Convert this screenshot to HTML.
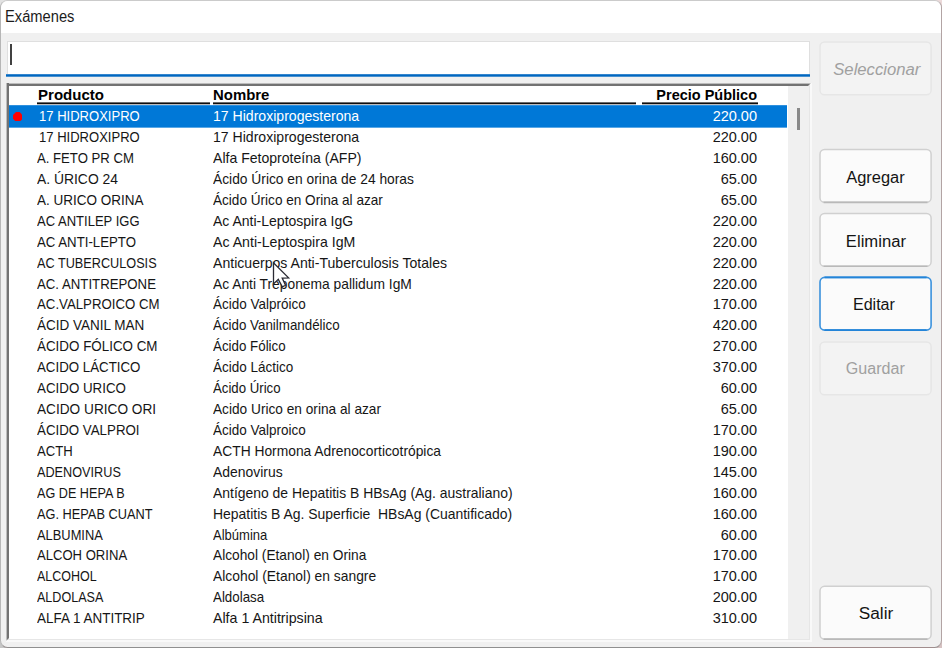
<!DOCTYPE html><html><head><meta charset="utf-8"><title>Exámenes</title><style>
html,body{margin:0;padding:0;}
body{width:943px;height:649px;overflow:hidden;background:#fff;font-family:"Liberation Sans",sans-serif;position:relative;}
#corner{position:absolute;left:0;top:0;width:942px;height:648px;background:#fff;}
.cn{position:absolute;width:10px;height:10px;}
#win{position:absolute;left:0;top:0;width:940px;height:646px;border:1px solid;border-color:#cbcbcb #b2a4a4 #979090 #b6b6b6;border-radius:7.5px;background:#f0f0f0;overflow:hidden;}
#title{position:absolute;left:0;top:0;width:940px;height:32.3px;background:#fff;}
#title span{position:absolute;left:4.2px;top:7.2px;font-size:15.8px;line-height:18px;color:#1c1c1c;white-space:nowrap;transform-origin:0 0;transform:scaleX(0.93);}
#inp{position:absolute;left:5.5px;top:39.5px;width:803.3px;height:34.5px;background:#fff;border:1px solid #dfdfdf;border-bottom:none;box-sizing:border-box;}
#inpline{position:absolute;left:5px;top:73px;width:804.4px;height:3px;background:linear-gradient(#3385cd 0,#3385cd 1px,#0067c0 1px,#0067c0 2px,#4890ce 2px,#4890ce 3px);}
#caret{position:absolute;left:9px;top:43px;width:2px;height:21px;background:#414141;}
.abs{position:absolute;}
.btn{position:absolute;left:819.7px;width:109.9px;height:51.3px;border:1.5px solid transparent;border-radius:5.5px;background:transparent;font-size:16px;color:#141414;text-align:center;line-height:54.6px;overflow:hidden;}
.btn span{display:inline-block;}
.btn.dis{color:#a0a0a0;}

.t{position:absolute;white-space:pre;font-size:14.2px;line-height:16px;height:16px;color:#161616;transform-origin:0 0;}
.p{position:absolute;white-space:pre;font-size:14.2px;line-height:16px;height:16px;color:#161616;width:80px;text-align:right;transform-origin:100% 0;}
.h{position:absolute;white-space:pre;font-size:14.8px;line-height:16px;color:#000;font-weight:bold;transform-origin:0 0;}
.w{color:#fff;}
</style></head><body>
<div id="corner"></div><div class="cn" style="left:0;top:0;background:#e2e2e2"></div><div class="cn" style="left:932px;top:0;background:#ecdada"></div><div class="cn" style="left:0;top:638px;background:#c6c6c6"></div><div class="cn" style="left:932px;top:638px;background:#d6c2c2"></div>
<div id="win">
<div id="title"><span>Exámenes</span></div>
<div id="inp"></div><div id="inpline"></div><div id="caret"></div>
</div>
<div class="abs" style="left:8px;top:647px;width:926px;height:1px;background:linear-gradient(90deg,#8f8f8f 0,#8f8f8f 84%,#a18d8d 88%,#a18d8d 100%);"></div>
<div class="abs" style="left:6px;top:83px;width:805.8px;height:558.6px;background:#f9f9f9;"></div>
<div class="abs" style="left:6px;top:83px;width:804px;height:557px;background:#e6e6e6;"></div>
<div class="abs" style="left:9px;top:86px;width:800px;height:553px;background:#fff;"></div>
<div class="abs" style="left:6px;top:83px;width:805px;height:3px;background:linear-gradient(#bcbcbc 0,#bcbcbc 1px,#727272 1px,#727272 3px);clip-path:polygon(0 0,100% 0,calc(100% - 3px) 100%,0 100%);"></div>
<div class="abs" style="left:6px;top:83px;width:3px;height:558px;background:linear-gradient(90deg,#bcbcbc 0,#bcbcbc 1px,#727272 1px,#727272 3px);clip-path:polygon(0 0,100% 0,100% calc(100% - 3px),0 100%);"></div>
<div class="abs" style="left:787.5px;top:86px;width:21.5px;height:553px;background:#f0f0f0;"></div>
<div class="abs" style="left:797.1px;top:108.2px;width:2.7px;height:22px;background:#8a8a8a;"></div>
<div class="h" id="h1" style="left:38.3px;top:87.3px;transform:scaleX(1.0160);">Producto</div>
<div class="h" id="h2" style="left:213.2px;top:87.3px;transform:scaleX(1.0090);">Nombre</div>
<div class="h" id="h3" style="left:557.4px;width:200px;text-align:right;top:87.3px;transform-origin:100% 0;transform:scaleX(0.9790);">Precio Público</div>
<div class="abs" style="left:37.4px;top:102px;width:172.5px;height:3px;background:linear-gradient(#6a6a6a 0,#6a6a6a 1px,#0e0e0e 1px,#0e0e0e 2px,#bdbdbd 2px,#bdbdbd 3px);"></div>
<div class="abs" style="left:212.9px;top:102px;width:423.2px;height:3px;background:linear-gradient(#6a6a6a 0,#6a6a6a 1px,#0e0e0e 1px,#0e0e0e 2px,#bdbdbd 2px,#bdbdbd 3px);"></div>
<div class="abs" style="left:641.7px;top:102px;width:116.1px;height:3px;background:linear-gradient(#6a6a6a 0,#6a6a6a 1px,#0e0e0e 1px,#0e0e0e 2px,#bdbdbd 2px,#bdbdbd 3px);"></div>
<div class="abs" style="left:9px;top:105px;width:778px;height:23px;background:linear-gradient(#2e90de 0,#2e90de 1px,#0078d7 1px,#0078d7 22px,#5aa8e6 22px,#5aa8e6 23px);"></div>
<svg class="abs" style="left:12.6px;top:111.6px;" width="9.6" height="9.8" viewBox="0 0 9.6 9.8"><polygon points="3,0 6.6,0 9.6,3 9.6,6.8 6.6,9.8 3,9.8 0,6.8 0,3" fill="#fe0000"/></svg>
<div class="t w" id="a0" style="left:38.8px;top:108.21px;transform:scaleX(0.9192);">17 HIDROXIPRO</div>
<div class="t w" id="b0" style="left:213.0px;top:108.21px;transform:scaleX(0.9912);">17 Hidroxiprogesterona</div>
<div class="p w" id="c0" style="left:677.0px;top:108.21px;transform:scaleX(1.0220);">220.00</div>
<div class="t" id="a1" style="left:38.8px;top:129.12px;transform:scaleX(0.9192);">17 HIDROXIPRO</div>
<div class="t" id="b1" style="left:213.0px;top:129.12px;transform:scaleX(0.9912);">17 Hidroxiprogesterona</div>
<div class="p" id="c1" style="left:677.0px;top:129.12px;transform:scaleX(1.0220);">220.00</div>
<div class="t" id="a2" style="left:37.4px;top:150.04px;transform:scaleX(0.9264);">A. FETO PR CM</div>
<div class="t" id="b2" style="left:213.0px;top:150.04px;transform:scaleX(0.9913);">Alfa Fetoproteína (AFP)</div>
<div class="p" id="c2" style="left:677.0px;top:150.04px;transform:scaleX(1.0220);">160.00</div>
<div class="t" id="a3" style="left:37.4px;top:170.96px;transform:scaleX(0.9781);">A. ÚRICO 24</div>
<div class="t" id="b3" style="left:213.0px;top:170.96px;transform:scaleX(0.9724);">Ácido Úrico en orina de 24 horas</div>
<div class="p" id="c3" style="left:677.0px;top:170.96px;transform:scaleX(1.0220);">65.00</div>
<div class="t" id="a4" style="left:37.4px;top:191.87px;transform:scaleX(0.9519);">A. URICO ORINA</div>
<div class="t" id="b4" style="left:213.0px;top:191.87px;transform:scaleX(0.9572);">Ácido Úrico en Orina al azar</div>
<div class="p" id="c4" style="left:677.0px;top:191.87px;transform:scaleX(1.0220);">65.00</div>
<div class="t" id="a5" style="left:37.4px;top:212.79px;transform:scaleX(0.9182);">AC ANTILEP IGG</div>
<div class="t" id="b5" style="left:213.0px;top:212.79px;transform:scaleX(0.9873);">Ac Anti-Leptospira IgG</div>
<div class="p" id="c5" style="left:677.0px;top:212.79px;transform:scaleX(1.0220);">220.00</div>
<div class="t" id="a6" style="left:37.4px;top:233.71px;transform:scaleX(0.9316);">AC ANTI-LEPTO</div>
<div class="t" id="b6" style="left:213.0px;top:233.71px;transform:scaleX(0.9972);">Ac Anti-Leptospira IgM</div>
<div class="p" id="c6" style="left:677.0px;top:233.71px;transform:scaleX(1.0220);">220.00</div>
<div class="t" id="a7" style="left:37.4px;top:254.63px;transform:scaleX(0.8942);">AC TUBERCULOSIS</div>
<div class="t" id="b7" style="left:213.0px;top:254.63px;transform:scaleX(0.9924);">Anticuerpos Anti-Tuberculosis Totales</div>
<div class="p" id="c7" style="left:677.0px;top:254.63px;transform:scaleX(1.0220);">220.00</div>
<div class="t" id="a8" style="left:37.4px;top:275.54px;transform:scaleX(0.9317);">AC. ANTITREPONE</div>
<div class="t" id="b8" style="left:213.0px;top:275.54px;transform:scaleX(0.9735);">Ac Anti Treponema pallidum IgM</div>
<div class="p" id="c8" style="left:677.0px;top:275.54px;transform:scaleX(1.0220);">220.00</div>
<div class="t" id="a9" style="left:37.4px;top:296.46px;transform:scaleX(0.9325);">AC.VALPROICO CM</div>
<div class="t" id="b9" style="left:213.0px;top:296.46px;transform:scaleX(0.9498);">Ácido Valpróico</div>
<div class="p" id="c9" style="left:677.0px;top:296.46px;transform:scaleX(1.0220);">170.00</div>
<div class="t" id="a10" style="left:37.4px;top:317.38px;transform:scaleX(0.9524);">ÁCID VANIL MAN</div>
<div class="t" id="b10" style="left:213.0px;top:317.38px;transform:scaleX(0.9406);">Ácido Vanilmandélico</div>
<div class="p" id="c10" style="left:677.0px;top:317.38px;transform:scaleX(1.0220);">420.00</div>
<div class="t" id="a11" style="left:37.4px;top:338.29px;transform:scaleX(0.9438);">ÁCIDO FÓLICO CM</div>
<div class="t" id="b11" style="left:213.0px;top:338.29px;transform:scaleX(0.9400);">Ácido Fólico</div>
<div class="p" id="c11" style="left:677.0px;top:338.29px;transform:scaleX(1.0220);">270.00</div>
<div class="t" id="a12" style="left:37.4px;top:359.21px;transform:scaleX(0.9374);">ACIDO LÁCTICO</div>
<div class="t" id="b12" style="left:213.0px;top:359.21px;transform:scaleX(0.9498);">Ácido Láctico</div>
<div class="p" id="c12" style="left:677.0px;top:359.21px;transform:scaleX(1.0220);">370.00</div>
<div class="t" id="a13" style="left:37.4px;top:380.13px;transform:scaleX(0.9406);">ACIDO URICO</div>
<div class="t" id="b13" style="left:213.0px;top:380.13px;transform:scaleX(0.9312);">Ácido Úrico</div>
<div class="p" id="c13" style="left:677.0px;top:380.13px;transform:scaleX(1.0220);">60.00</div>
<div class="t" id="a14" style="left:37.4px;top:401.04px;transform:scaleX(0.9624);">ACIDO URICO ORI</div>
<div class="t" id="b14" style="left:213.0px;top:401.04px;transform:scaleX(0.9639);">Acido Urico en orina al azar</div>
<div class="p" id="c14" style="left:677.0px;top:401.04px;transform:scaleX(1.0220);">65.00</div>
<div class="t" id="a15" style="left:37.4px;top:421.96px;transform:scaleX(0.9381);">ÁCIDO VALPROI</div>
<div class="t" id="b15" style="left:213.0px;top:421.96px;transform:scaleX(0.9498);">Ácido Valproico</div>
<div class="p" id="c15" style="left:677.0px;top:421.96px;transform:scaleX(1.0220);">170.00</div>
<div class="t" id="a16" style="left:37.4px;top:442.88px;transform:scaleX(0.9249);">ACTH</div>
<div class="t" id="b16" style="left:213.0px;top:442.88px;transform:scaleX(0.9736);">ACTH Hormona Adrenocorticotrópica</div>
<div class="p" id="c16" style="left:677.0px;top:442.88px;transform:scaleX(1.0220);">190.00</div>
<div class="t" id="a17" style="left:37.4px;top:463.80px;transform:scaleX(0.8939);">ADENOVIRUS</div>
<div class="t" id="b17" style="left:213.0px;top:463.80px;transform:scaleX(0.9816);">Adenovirus</div>
<div class="p" id="c17" style="left:677.0px;top:463.80px;transform:scaleX(1.0220);">145.00</div>
<div class="t" id="a18" style="left:37.4px;top:484.71px;transform:scaleX(0.8911);">AG DE HEPA B</div>
<div class="t" id="b18" style="left:213.0px;top:484.71px;transform:scaleX(0.9816);">Antígeno de Hepatitis B HBsAg (Ag. australiano)</div>
<div class="p" id="c18" style="left:677.0px;top:484.71px;transform:scaleX(1.0220);">160.00</div>
<div class="t" id="a19" style="left:37.4px;top:505.63px;transform:scaleX(0.9002);">AG. HEPAB CUANT</div>
<div class="t" id="b19" style="left:213.0px;top:505.63px;transform:scaleX(0.9825);">Hepatitis B Ag. Superficie  HBsAg (Cuantificado)</div>
<div class="p" id="c19" style="left:677.0px;top:505.63px;transform:scaleX(1.0220);">160.00</div>
<div class="t" id="a20" style="left:37.4px;top:526.55px;transform:scaleX(0.9073);">ALBUMINA</div>
<div class="t" id="b20" style="left:213.0px;top:526.55px;transform:scaleX(0.9179);">Albúmina</div>
<div class="p" id="c20" style="left:677.0px;top:526.55px;transform:scaleX(1.0220);">60.00</div>
<div class="t" id="a21" style="left:37.4px;top:547.46px;transform:scaleX(0.9217);">ALCOH ORINA</div>
<div class="t" id="b21" style="left:213.0px;top:547.46px;transform:scaleX(0.9672);">Alcohol (Etanol) en Orina</div>
<div class="p" id="c21" style="left:677.0px;top:547.46px;transform:scaleX(1.0220);">170.00</div>
<div class="t" id="a22" style="left:37.4px;top:568.38px;transform:scaleX(0.8796);">ALCOHOL</div>
<div class="t" id="b22" style="left:213.0px;top:568.38px;transform:scaleX(0.9760);">Alcohol (Etanol) en sangre</div>
<div class="p" id="c22" style="left:677.0px;top:568.38px;transform:scaleX(1.0220);">170.00</div>
<div class="t" id="a23" style="left:37.4px;top:589.30px;transform:scaleX(0.8845);">ALDOLASA</div>
<div class="t" id="b23" style="left:213.0px;top:589.30px;transform:scaleX(0.9397);">Aldolasa</div>
<div class="p" id="c23" style="left:677.0px;top:589.30px;transform:scaleX(1.0220);">200.00</div>
<div class="t" id="a24" style="left:37.4px;top:610.21px;transform:scaleX(0.9497);">ALFA 1 ANTITRIP</div>
<div class="t" id="b24" style="left:213.0px;top:610.21px;transform:scaleX(1.0000);">Alfa 1 Antitripsina</div>
<div class="p" id="c24" style="left:677.0px;top:610.21px;transform:scaleX(1.0220);">310.00</div>
<svg class="abs" style="left:0;top:0;" width="943" height="649" viewBox="0 0 943 649"><rect x="820.00" y="42.05" width="111.10" height="52.80" rx="4.6" fill="#f3f3f3" stroke="#e6e6e6" stroke-width="1.5"/><rect x="820.00" y="149.55" width="111.10" height="52.80" rx="4.6" fill="#fbfbfb" stroke="#d0d0d0" stroke-width="1.5"/><path d="M823.60,202.35 H927.50" fill="none" stroke="#b9b9b9" stroke-width="1.6"/><rect x="820.00" y="213.45" width="111.10" height="52.80" rx="4.6" fill="#fbfbfb" stroke="#d0d0d0" stroke-width="1.5"/><path d="M823.60,266.25 H927.50" fill="none" stroke="#b9b9b9" stroke-width="1.6"/><rect x="820.00" y="277.35" width="111.10" height="52.80" rx="4.6" fill="#fbfbfb" stroke="#3b92dd" stroke-width="1.6"/><path d="M824.60,277.35 H926.50 M824.60,330.15 H926.50" fill="none" stroke="#2384d8" stroke-width="1.7"/><rect x="820.00" y="341.95" width="111.10" height="52.80" rx="4.6" fill="#f3f3f3" stroke="#e6e6e6" stroke-width="1.5"/><rect x="820.00" y="586.35" width="111.10" height="52.80" rx="4.6" fill="#fbfbfb" stroke="#d0d0d0" stroke-width="1.5"/><path d="M823.60,639.15 H927.50" fill="none" stroke="#b9b9b9" stroke-width="1.6"/></svg>
<div class="btn dis" style="top:41.4px;line-height:55.6px;font-style:italic;padding-left:2.4px;width:107.5px;"><span style="transform:scaleX(1.042);">Seleccionar</span></div>
<div class="btn " style="top:148.9px;line-height:55.6px;"><span style="transform:scaleX(1.027);">Agregar</span></div>
<div class="btn " style="top:212.9px;line-height:55.6px;"><span style="transform:scaleX(1.039);">Eliminar</span></div>
<div class="btn foc" style="top:276.7px;padding-right:3px;width:106.9px;"><span style="transform:scaleX(1.004);">Editar</span></div>
<div class="btn dis" style="top:341.2px;"><span style="transform:scaleX(1.005);">Guardar</span></div>
<div class="btn " style="top:585.7px;"><span style="transform:scaleX(1.078);">Salir</span></div>
<svg class="abs" style="left:272px;top:261px;" width="20" height="27" viewBox="0 0 20 27"><path d="M1.5,1.8 L1.5,22.9 L6.3,18.4 L10.3,25.8 L13.5,24.3 L10.2,17.0 L16.6,16.8 Z" fill="#fff" stroke="#2a2a33" stroke-width="1.3" stroke-linejoin="miter"/></svg>
</body></html>
